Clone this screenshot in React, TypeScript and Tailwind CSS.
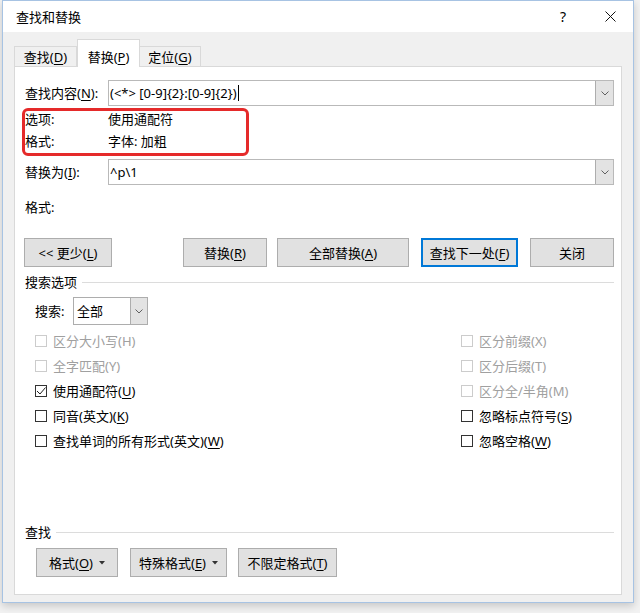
import React from "react";

const Chevron = () => (
    <svg width="8" height="5" viewBox="0 0 8 5" fill="none">
        <path d="M0.5 0.5 L4 4 L7.5 0.5" stroke="#606060" strokeWidth="1" />
    </svg>
);

const Caret = () => (
    <svg width="6" height="4" viewBox="0 0 6 4" className="ml-[6px]">
        <path d="M0 0 L6 0 L3 3.5 Z" fill="#333" />
    </svg>
);

// access key letter, underlined like the Windows dialog
const K = ({ children }: { children: React.ReactNode }) => (
    <span className="underline decoration-1 underline-offset-[2px]">{children}</span>
);

const Combo = ({ value, cursor }: { value: string; cursor?: boolean }) => (
    <div className="flex h-[26px] flex-1 border border-[#b9b9b9] bg-white">
        <div className="flex flex-1 items-center pl-[1px]">
            <span>{value}</span>
            {cursor && <span className="ml-[1px] h-[16px] w-px bg-black" />}
        </div>
        <div className="my-[-0px] flex w-[18px] items-center justify-center border-l border-[#adadad] bg-[#e3e3e3]">
            <Chevron />
        </div>
    </div>
);

const Btn = ({ className, focus, children }: { className: string; focus?: boolean; children: React.ReactNode }) => (
    <div
        className={`flex h-[29px] items-center justify-center bg-[#e1e1e1] ${
            focus ? "border-2 border-[#0078d7]" : "border border-[#adadad]"
        } ${className}`}
    >
        {children}
    </div>
);

const Check = ({ checked, disabled, children }: { checked?: boolean; disabled?: boolean; children: React.ReactNode }) => (
    <div className="flex h-[25px] items-center">
        <span
            className={`flex h-[12px] w-[12px] items-center justify-center border bg-white ${
                disabled ? "border-[#cccccc]" : "border-[#333333]"
            }`}
        >
            {checked && (
                <svg width="10" height="10" viewBox="0 0 10 10" fill="none">
                    <path d="M1 5 L4 8 L9.5 1.5" stroke="#222" strokeWidth="1" />
                </svg>
            )}
        </span>
        <span className={`ml-[6px] ${disabled ? "text-[#a0a0a0]" : ""}`}>{children}</span>
    </div>
);

const Section = ({ title }: { title: string }) => (
    <div className="flex h-[16px] items-center">
        <span>{title}</span>
        <div className="ml-[5px] h-px flex-1 bg-[#dcdcdc]" />
    </div>
);

export default function App() {
    return (
        <div className="h-[613px] w-[640px] bg-[#f2f2f2] font-['Noto_Sans','Noto_Sans_CJK_SC',sans-serif] text-[13px] leading-[16px] text-black">
            <div className="ml-[2px] flex h-[603px] w-[632px] flex-col border border-[#a7c3e3] bg-[#f0f0f0] shadow-[0_3px_8px_rgba(0,0,0,0.18)]">
                {/* Title bar */}
                <div className="flex h-[31px] items-center bg-white pl-[13px]">
                    <span>查找和替换</span>
                    <div className="ml-auto flex h-full">
                        <div className="flex w-[48px] items-center justify-center text-[14px]">?</div>
                        <div className="flex w-[46px] items-center justify-center">
                            <svg width="11" height="11" viewBox="0 0 11 11">
                                <path d="M0.5 0.5 L10.5 10.5 M10.5 0.5 L0.5 10.5" stroke="#111" strokeWidth="1" />
                            </svg>
                        </div>
                    </div>
                </div>

                {/* Body */}
                <div className="flex flex-1 flex-col pl-[11px] pt-[7px]">
                    {/* Tabs */}
                    <div className="flex h-[27px] items-end">
                        <div className="flex h-[20px] w-[63px] items-center justify-center border border-b-0 border-[#d9d9d9] bg-[#f0f0f0]">
                            查找(<K>D</K>)
                        </div>
                        <div className="relative z-10 -mb-px flex h-[28px] w-[63px] items-start justify-center border border-b-0 border-[#d9d9d9] bg-white pt-[9px]">
                            替换(<K>P</K>)
                        </div>
                        <div className="flex h-[20px] w-[61px] items-center justify-center border border-b-0 border-l-0 border-[#d9d9d9] bg-[#f0f0f0]">
                            定位(<K>G</K>)
                        </div>
                    </div>

                    {/* Panel */}
                    <div className="flex h-[529px] w-[608px] flex-col border border-[#d9d9d9] bg-white pb-[17px] pl-[10px] pr-[7px] pt-[13px]">
                        <div className="flex items-center">
                            <span className="w-[83px]">
                                查找内容(<K>N</K>):
                            </span>
                            <Combo value="(<*> [0-9]{2}:[0-9]{2})" cursor />
                        </div>

                        <div className="ml-[-3px] mt-[2px] flex h-[48px] w-[227px] flex-col gap-[6px] rounded-[6px] border-[3px] border-[#e52a2a]">
                            <div className="flex h-[16px]">
                                <span className="w-[83px]">选项:</span>
                                <span>使用通配符</span>
                            </div>
                            <div className="flex h-[16px]">
                                <span className="w-[83px]">格式:</span>
                                <span>字体: 加粗</span>
                            </div>
                        </div>

                        <div className="mt-[3px] flex items-center">
                            <span className="w-[83px]">
                                替换为(<K>I</K>):
                            </span>
                            <Combo value="^p\1" />
                        </div>

                        <div className="mt-[14px] h-[16px]">格式:</div>

                        <div className="mt-[23px] flex">
                            <Btn className="ml-[-1px] w-[88px]">
                                &lt;&lt; 更少(<K>L</K>)
                            </Btn>
                            <div className="ml-auto flex">
                                <Btn className="w-[84px]">
                                    替换(<K>R</K>)
                                </Btn>
                                <Btn className="ml-[10px] w-[132px]">
                                    全部替换(<K>A</K>)
                                </Btn>
                                <Btn focus className="ml-[12px] w-[97px]">
                                    查找下一处(<K>F</K>)
                                </Btn>
                                <Btn className="ml-[12px] w-[84px]">关闭</Btn>
                            </div>
                        </div>

                        <div className="mt-[7px]">
                            <Section title="搜索选项" />
                        </div>

                        <div className="pl-[10px]">
                            <div className="mt-[7px] flex items-center">
                                <span className="w-[38px]">搜索:</span>
                                <div className="flex h-[28px] w-[75px] border border-[#adadad] bg-white">
                                    <span className="flex flex-1 items-center pl-[3px]">全部</span>
                                    <span className="flex w-[17px] items-center justify-center border-l border-[#adadad] bg-[#e3e3e3]">
                                        <Chevron />
                                    </span>
                                </div>
                            </div>

                            <div className="mt-[3px] grid grid-cols-[426px_1fr]">
                                <Check disabled>区分大小写(H)</Check>
                                <Check disabled>区分前缀(X)</Check>
                                <Check disabled>全字匹配(Y)</Check>
                                <Check disabled>区分后缀(T)</Check>
                                <Check checked>
                                    使用通配符(<K>U</K>)
                                </Check>
                                <Check disabled>区分全/半角(M)</Check>
                                <Check>
                                    同音(英文)(<K>K</K>)
                                </Check>
                                <Check>
                                    忽略标点符号(<K>S</K>)
                                </Check>
                                <Check>
                                    查找单词的所有形式(英文)(<K>W</K>)
                                </Check>
                                <Check>
                                    忽略空格(<K>W</K>)
                                </Check>
                            </div>
                        </div>

                        <div className="mt-auto">
                            <Section title="查找" />
                            <div className="mt-[8px] flex pl-[11px]">
                                <Btn className="w-[82px]">
                                    格式(<K>O</K>)
                                    <Caret />
                                </Btn>
                                <Btn className="ml-[12px] w-[97px]">
                                    特殊格式(<K>E</K>)
                                    <Caret />
                                </Btn>
                                <Btn className="ml-[11px] w-[99px]">
                                    不限定格式(<K>T</K>)
                                </Btn>
                            </div>
                        </div>
                    </div>
                </div>
            </div>
        </div>
    );
}
